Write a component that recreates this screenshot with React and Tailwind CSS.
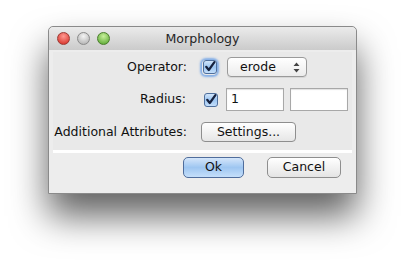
import React from "react";

const font = { fontFamily: '"DejaVu Sans", "Liberation Sans", Arial, sans-serif' };

const Light = ({ from, to, ring }) => (
  <div
    className={`h-[13px] w-[13px] rounded-full border ${ring}`}
    style={{ background: `radial-gradient(circle at 50% 30%, ${from}, ${to})` }}
  />
);

const Check = ({ focus = false }) => (
  <div
    className={
      focus
        ? "flex h-[15px] w-[15px] items-center justify-center rounded-[4px] shadow-[0_0_2px_2px_rgba(90,150,230,0.7)]"
        : "flex h-[15px] w-[15px] items-center justify-center"
    }
  >
    <svg width="14" height="14" viewBox="0 0 14 14">
      <defs>
        <linearGradient id={focus ? "cbf" : "cb"} x1="0" y1="0" x2="0" y2="1">
          <stop offset="0" stopColor="#d6e8fb" />
          <stop offset="0.5" stopColor="#9cc5f1" />
          <stop offset="1" stopColor="#c6e0fb" />
        </linearGradient>
      </defs>
      <rect x="0.5" y="0.5" width="13" height="13" rx="2.5" fill={`url(#${focus ? "cbf" : "cb"})`} stroke="#4f6f9c" />
      <path d="M3.2 6.8 L5.8 10 L11.4 2.2" fill="none" stroke="#16213d" strokeWidth="2.2" strokeLinecap="round" strokeLinejoin="round" />
    </svg>
  </div>
);

export default function App() {
  return (
    <div className="h-[265px] w-[406px] bg-white pl-[48px] pt-[26px]" style={font}>
      <div className="flex h-[168px] w-[309px] flex-col rounded-t-[5px] border border-[#8a8a8a] bg-[#ededed] shadow-[0_22px_36px_rgba(0,0,0,0.62)]">
        <div className="relative flex h-[23px] items-center gap-[7px] rounded-t-[5px] bg-gradient-to-b from-[#ebebeb] to-[#cbcbcb] pl-[8px]">
          <Light from="#ff9a92" to="#d2251c" ring="border-[#9b3a34]" />
          <Light from="#f4f4f4" to="#a9a9a9" ring="border-[#8a8a8a]" />
          <Light from="#c8f09c" to="#4fa128" ring="border-[#4a7d2c]" />
          <div className="absolute inset-0 flex items-center justify-center pt-[1px] text-[12.6px] text-[#262626]">
            Morphology
          </div>
        </div>
        <div className="px-[4px] pt-[2px]">
          <div className="flex flex-col gap-[11px] border-b-[3px] border-white bg-[#e9e9e9] pb-[8px] pt-[5px] text-[12.5px] text-[#111]">
            <div className="flex h-[20px] items-center">
              <div className="w-[135px] pr-[1px] text-right">Operator:</div>
              <div className="ml-[14px]">
                <Check focus />
              </div>
              <div className="ml-[10px] flex h-[20px] w-[80px] items-center rounded-[4px] border border-[#9a9a9a] bg-gradient-to-b from-white to-[#ececec] pl-[12px] pr-[6px] shadow-[0_1px_0_rgba(0,0,0,0.08)]">
                <span className="flex-1">erode</span>
                <svg width="7" height="11" viewBox="0 0 7 11">
                  <path d="M0.5 4 L3.5 0.5 L6.5 4 Z M0.5 7 L3.5 10.5 L6.5 7 Z" fill="#444" />
                </svg>
              </div>
            </div>
            <div className="flex h-[23px] items-center">
              <div className="w-[135px] pr-[2px] text-right">Radius:</div>
              <div className="ml-[15px]">
                <Check />
              </div>
              <div className="ml-[8px] flex h-[23px] w-[58px] items-center border border-[#a8a8a8] bg-white pl-[4px] shadow-[inset_0_1px_1px_rgba(0,0,0,0.12)]">
                1
              </div>
              <div className="ml-[6px] h-[23px] w-[58px] border border-[#a8a8a8] bg-white shadow-[inset_0_1px_1px_rgba(0,0,0,0.12)]" />
            </div>
            <div className="flex h-[20px] items-center">
              <div className="w-[135px] pr-[1px] text-right">Additional Attributes:</div>
              <div className="ml-[13px] flex h-[20px] w-[95px] items-center justify-center rounded-[4px] border border-[#8e8e8e] bg-gradient-to-b from-white to-[#e6e6e6]">
                Settings...
              </div>
            </div>
          </div>
        </div>
        <div className="flex justify-end gap-[23px] pr-[15px] pt-[4px] text-[12.5px] text-[#111]">
          <div className="flex h-[21px] w-[61px] items-center justify-center rounded-[5px] border border-[#4f6d9c] bg-gradient-to-b from-[#d5e6fa] via-[#9ec6f1] to-[#c5dffa]">
            Ok
          </div>
          <div className="flex h-[21px] w-[74px] items-center justify-center rounded-[5px] border border-[#8e8e8e] bg-gradient-to-b from-white to-[#e4e4e4]">
            Cancel
          </div>
        </div>
      </div>
    </div>
  );
}
